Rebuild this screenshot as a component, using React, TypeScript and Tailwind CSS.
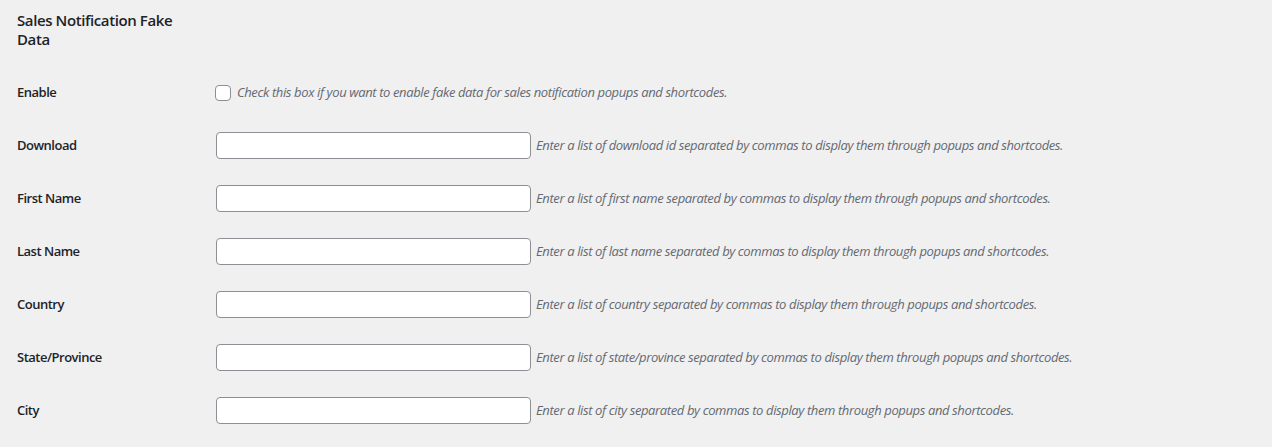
import React from "react";

const fields = [
  { label: "Download", name: "download id" },
  { label: "First Name", name: "first name" },
  { label: "Last Name", name: "last name" },
  { label: "Country", name: "country" },
  { label: "State/Province", name: "state/province" },
  { label: "City", name: "city" },
];

export default function App() {
  return (
    <div
      className="min-h-screen w-full bg-[#f0f0f1] pl-[17px] pt-[11px] text-[13px] text-[#1d2327]"
      style={{ fontFamily: '"Open Sans", "Noto Sans", sans-serif' }}
    >
      <h2 className="w-[180px] text-[15px] font-semibold leading-[19px] tracking-[-0.4px] text-[#1d2327]">
        Sales Notification Fake Data
      </h2>

      <div className="mt-[18px]">
        {/* enable row */}
        <div className="flex h-[52px] items-center">
          <div className="w-[198px] font-semibold tracking-[-0.5px]">Enable</div>
          <label className="flex items-center gap-[6px]">
            <input
              type="checkbox"
              className="h-4 w-4 appearance-none rounded-[4px] border border-[#8c8f94] bg-white"
            />
            <span className="italic tracking-[-0.38px] text-[#646970]">
              Check this box if you want to enable fake data for sales notification popups and shortcodes.
            </span>
          </label>
        </div>

        {fields.map((f) => (
          <div key={f.label} className="flex h-[53px] items-center">
            <div className="w-[199px] font-semibold tracking-[-0.5px]">{f.label}</div>
            <input
              type="text"
              className="h-[27px] w-[315px] rounded-[4px] border border-[#8c8f94] bg-white px-2 outline-none"
            />
            <span className="ml-[5px] italic tracking-[-0.38px] text-[#646970]">
              Enter a list of {f.name} separated by commas to display them through popups and shortcodes.
            </span>
          </div>
        ))}
      </div>
    </div>
  );
}
